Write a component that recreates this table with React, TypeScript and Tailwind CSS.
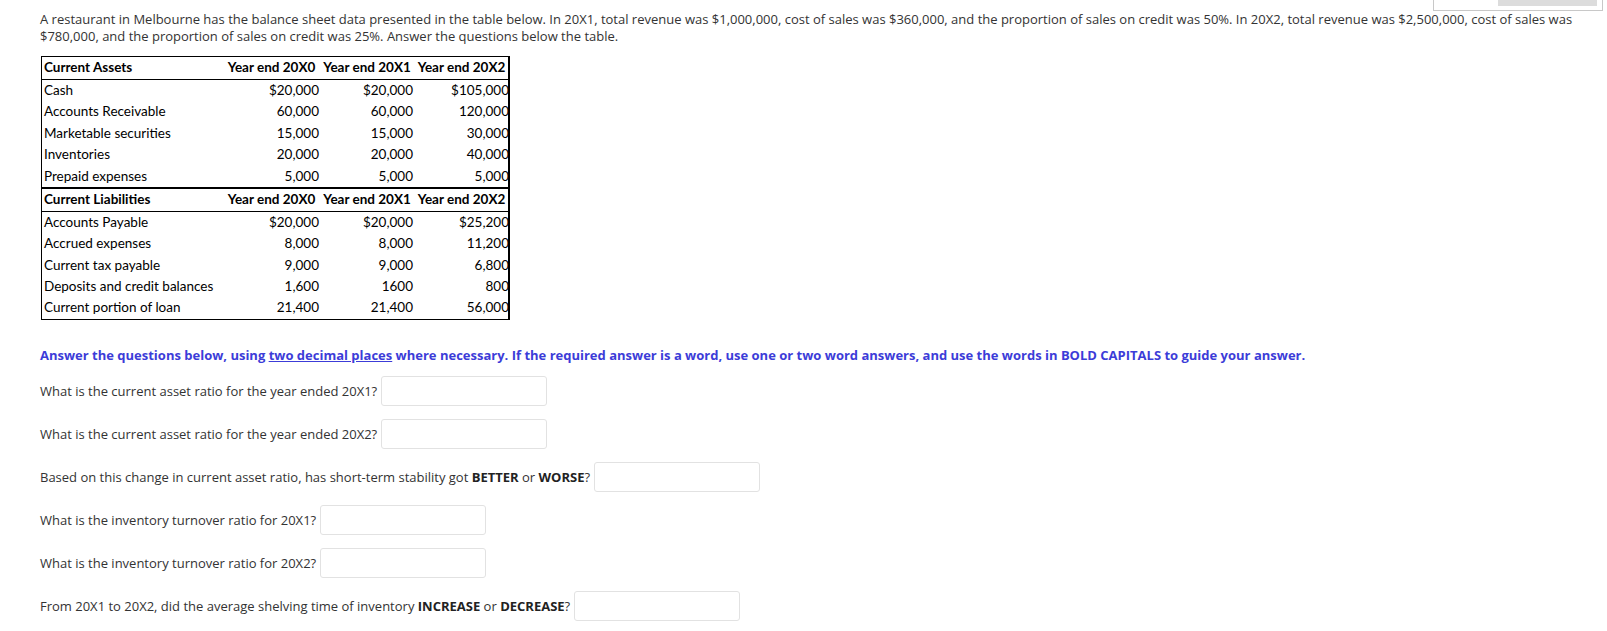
const assets = [
  ["Cash", "$20,000", "$20,000", "$105,000"],
  ["Accounts Receivable", "60,000", "60,000", "120,000"],
  ["Marketable securities", "15,000", "15,000", "30,000"],
  ["Inventories", "20,000", "20,000", "40,000"],
  ["Prepaid expenses", "5,000", "5,000", "5,000"],
];

const liabilities = [
  ["Accounts Payable", "$20,000", "$20,000", "$25,200"],
  ["Accrued expenses", "8,000", "8,000", "11,200"],
  ["Current tax payable", "9,000", "9,000", "6,800"],
  ["Deposits and credit balances", "1,600", "1600", "800"],
  ["Current portion of loan", "21,400", "21,400", "56,000"],
];

const years = ["Year end 20X0", "Year end 20X1", "Year end 20X2"];

function HeaderRow({ title }: { title: string }) {
  return (
    <div className="grid h-[22px] grid-cols-[181px_97px_94px_95px] items-center font-bold">
      <div className="pl-[2px]">{title}</div>
      {years.map((y) => (
        <div key={y} className="text-center">
          {y}
        </div>
      ))}
    </div>
  );
}

function DataRows({ rows }: { rows: string[][] }) {
  return (
    <div>
      {rows.map((row) => (
        <div
          key={row[0]}
          className="grid h-[21.4px] grid-cols-[181px_97px_94px_95px] items-center"
        >
          <div className="pl-[2px]">{row[0]}</div>
          <div className="pr-[1px] text-right">{row[1]}</div>
          <div className="pr-[1px] text-right">{row[2]}</div>
          <div className="text-right">{row[3]}</div>
        </div>
      ))}
    </div>
  );
}

function Answer({ children }: { children: React.ReactNode }) {
  return (
    <p className="flex h-[43px] items-center">
      <span>{children}</span>
      <input
        type="text"
        className="ml-[4px] h-[30px] w-[166px] rounded-[3px] border border-[#e2e2e2] bg-white outline-none"
      />
    </p>
  );
}

export default function App() {
  return (
    <div className="relative min-h-[631px] bg-white pl-[40px] font-['Open_Sans',sans-serif] text-[13px] leading-[17px] text-[#333]">
      <div className="absolute right-[4px] top-0 h-[11px] w-[170px] border-b border-l border-r border-[#c8c8c8] bg-white">
        <div className="absolute right-[5px] top-0 h-[6px] w-[99px] bg-[#dcdcdc]" />
      </div>

      <p className="w-[1540px] pt-[11px]">
        A restaurant in Melbourne has the balance sheet data presented in the table below. In 20X1, total revenue was
        $1,000,000, cost of sales was $360,000, and the proportion of sales on credit was 50%. In 20X2, total revenue was
        $2,500,000, cost of sales was $780,000, and the proportion of sales on credit was 25%. Answer the questions below
        the table.
      </p>

      <div className="ml-[1px] mt-[11px] w-[469px] border-b-[1.5px] border-l border-r-2 border-t border-black font-['Lato',sans-serif] text-[13.5px] leading-none text-black">
        <HeaderRow title="Current Assets" />
        <div className="border-t border-black">
          <DataRows rows={assets} />
        </div>
        <div className="border-t-2 border-black">
          <HeaderRow title="Current Liabilities" />
        </div>
        <div className="border-t border-black">
          <DataRows rows={liabilities} />
        </div>
      </div>

      <p className="mt-[27px] font-bold text-[#3c3cd8]">
        Answer the questions below, using <span className="underline">two decimal places</span> where necessary. If the
        required answer is a word, use one or two word answers, and use the words in BOLD CAPITALS to guide your answer.
      </p>

      <div className="mt-[6px]">
        <Answer>What is the current asset ratio for the year ended 20X1?</Answer>
        <Answer>What is the current asset ratio for the year ended 20X2?</Answer>
        <Answer>
          Based on this change in current asset ratio, has short-term stability got <b className="text-[#222]">BETTER</b> or{" "}
          <b className="text-[#222]">WORSE</b>?
        </Answer>
        <Answer>What is the inventory turnover ratio for 20X1?</Answer>
        <Answer>What is the inventory turnover ratio for 20X2?</Answer>
        <Answer>
          From 20X1 to 20X2, did the average shelving time of inventory <b className="text-[#222]">INCREASE</b> or{" "}
          <b className="text-[#222]">DECREASE</b>?
        </Answer>
      </div>
    </div>
  );
}
